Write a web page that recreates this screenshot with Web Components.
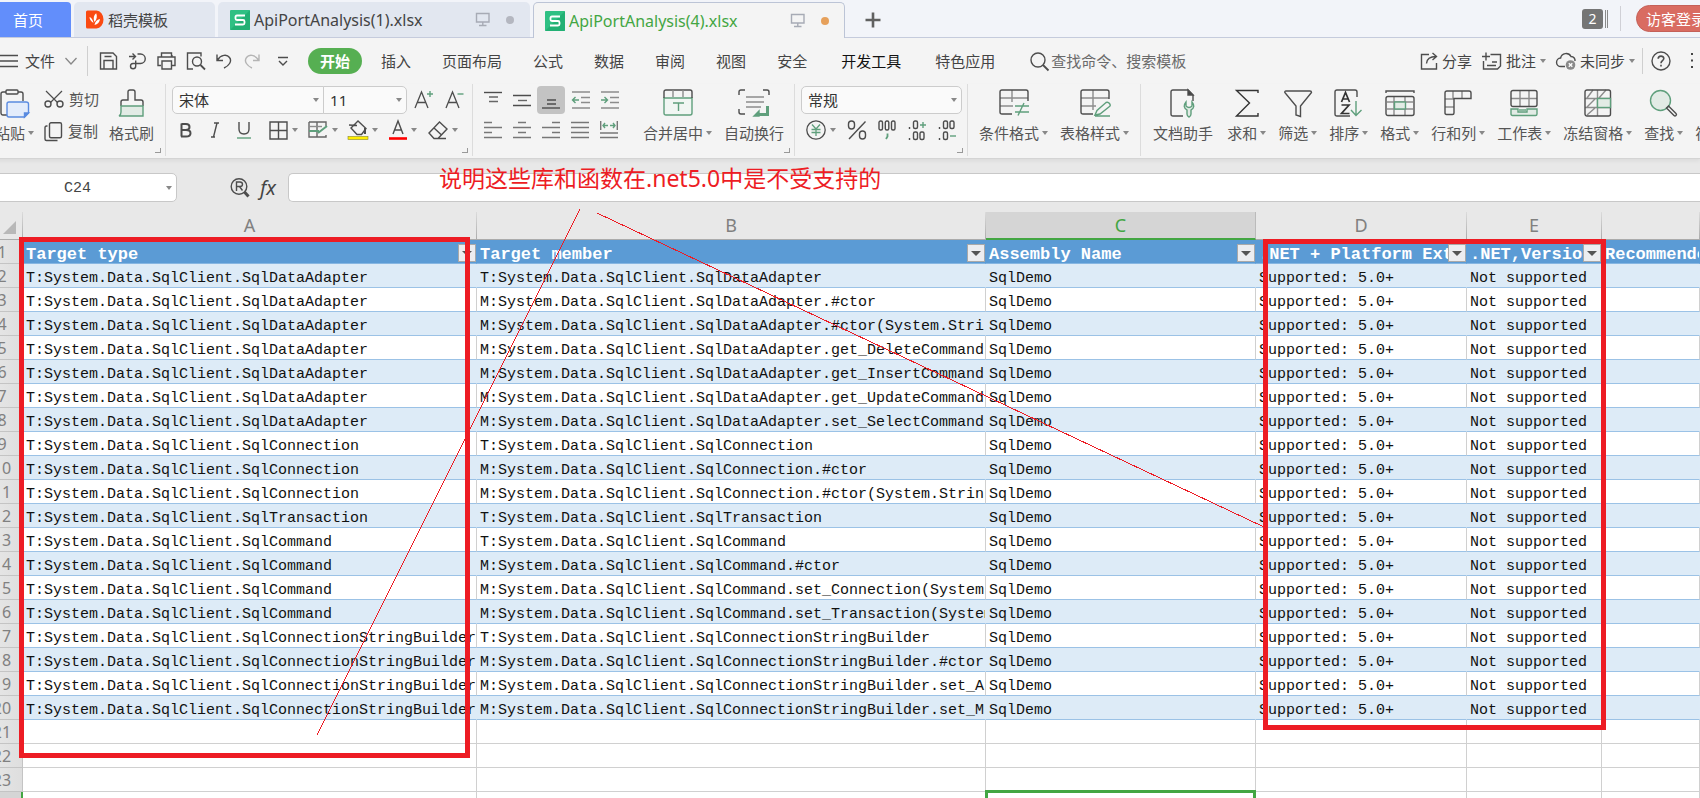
<!DOCTYPE html>
<html lang="zh-CN">
<head>
<meta charset="utf-8">
<title>ApiPortAnalysis(4).xlsx</title>
<style>
  html, body { margin: 0; height: 100%; }
  body {
    overflow: hidden;
    background: #e8e8e8;
    color: #444;
    font: 15px/20px "Noto Sans", "Noto Sans CJK SC", sans-serif;
    --mono: "Liberation Mono", "Noto Sans CJK SC", monospace;
    --green: #43a643;
  }
</style>
</head>
<body>
<app-window></app-window>

<script>
/* ---------- icons ---------- */
const D = '#4d4d4d', G = '#5f9f7c', L = '#8c8c8c', GF = '#e2ebe5';
const ICONS = {
  shell: [18, 19, `<g stroke="none"><path d="M1.500.5h9a7 9 0 0 1 0 18h-9a1.500 1.500 0 0 1-1.500-1.500V2a1.500 1.500 0 0 1 1.500-1.500z" fill="#fa4a12"/><path d="M7.500 13C4.500 11 3.500 9 3.500 7c2 .8 3.600 3 4 6zM8.500 12C7 8 8 5 10.200 3.200 11.400 6 11 9.500 8.500 12zM8.500 15c.5-3 2.500-5.500 5.500-6-.2 3-2.300 5.400-5.500 6z" fill="#fff"/></g>`],
  sheet: [20, 20, `<g stroke="none"><rect width="20" height="20" rx="1" fill="#2fc083"/><path d="M0 20L20 0v19a1 1 0 0 1-1 1z" fill="#22b074"/></g><path d="M15 5.500H7Q5.500 5.500 5.500 7v1.500Q5.500 10 7 10h6q1.500 0 1.500 1.500V13q0 1.500-1.500 1.500H5" fill="none" stroke="#fff" stroke-width="1.800"/>`],
  monitor: [16, 15, `<path d="M1.500 1.500h12.500v8.500H1.500zM7.800 10v3.500M4 13.500h7.500" stroke="#a7abb5" stroke-width="1.400"/>`],
  plus: [16, 16, `<path d="M8 .5v15M.5 8h15" stroke="#606060" stroke-width="2.600"/>`],
  menu: [18, 14, `<path d="M0 1.500h18M0 7h18M0 12.500h18" stroke-width="1.400"/>`],
  chevron: [12, 8, `<path d="M.5 1l5.500 6 5.500-6" stroke="#888" stroke-width="1.300"/>`],
  save: [19, 18, `<path d="M1.500 1h12.500l3.500 3.500V17h-16zM5 17V8.500h9V17M5.500 4.500h7" />`],
  pdf: [19, 18, `<path d="M1 4.500h6.500M4.500 1.500l3 3-3 3M9.500 2h3a4.700 4.700 0 0 1 0 9.500H5a2.600 2.600 0 1 0 2.700 2.700V8.500"/>`],
  print: [19, 18, `<path d="M4.500 5V1h10v4M4 13.500H1V5h17v8.500h-3M5 9h9.500v8H5zM15 5V3"/>`],
  preview: [20, 18, `<path d="M7 17H1.500V1h13.500v3.500"/><circle cx="11" cy="9.500" r="4.500"/><path d="M14.500 13l4.500 4.500" stroke-width="1.800"/>`],
  undo: [16, 16, `<path d="M1 1.500v6h6M1.500 7C5 1.500 11 1 13.500 4.500c3 4-1 8.500-5.500 10.500"/>`],
  redo: [16, 16, `<path d="M15 1.500v6H9M14.500 7C11 1.500 5 1 2.500 4.500c-3 4 1 8.500 5.500 10.500" stroke="#b4b4b4"/>`],
  more: [10, 10, `<path d="M0 1.500h10M1 5l4 4 4-4"/>`],
  search: [19, 19, `<circle cx="8" cy="8" r="7"/><path d="M13 13l5.500 5.500" stroke-width="1.800"/>`],
  share: [18, 18, `<path d="M9 2.500H1.500V17h15v-6M6.500 11.500c.3-4 2.500-7 9.500-7M12.500 1l4 3.500-4 3.500"/>`],
  comment: [20, 18, `<path d="M1.500 9v8h14l3-3V2.500H8.500M4 .5v8M0 4.500h8M10 10h5M5 13.500h9" />`],
  cloud: [20, 18, `<path d="M9 14.500H5A4.200 4.200 0 0 1 4.600 6 5.600 5.600 0 0 1 15 4.500c3 0 4.300 2.500 4 4.500"/><circle cx="14.500" cy="13" r="4.800" fill="#8a8a8a" stroke="none"/><path d="M12.800 11.200l3.500 3.500m0-3.500l-3.500 3.500" stroke="#fff"/>`],
  help: [20, 20, `<circle cx="10" cy="10" r="9"/><path d="M7.200 7.800c0-3.700 5.600-3.500 5.600-.2 0 2-2.800 2.200-2.800 4.600M10 13.800v1.700" stroke-width="1.600"/>`],
  dots: [4, 18, `<path d="M1 1h2v2H1zM1 7.500h2v2H1zM1 14h2v2H1z" fill="#444" stroke="none"/>`],
  paste: [30, 29, `<path d="M7 26H3a2 2 0 0 1-2-2V5a2 2 0 0 1 2-2h3M18 3h3a2 2 0 0 1 2 2v7"/><rect x="6" y="1" width="12" height="4" rx="1"/><path d="M9 13h17q2.500 0 2.500 2v9l-4 4H9q-2 0-2-2V15q0-2 2-2z" fill="#e3ecfb" stroke="#5a8be0"/><path d="M24.500 28v-4h4z" fill="#5a8be0" stroke="#5a8be0"/>`],
  cut: [20, 18, `<path d="M2 1l11.500 11.500M18 1L6.500 12.500" stroke-width="1.200"/><circle cx="4" cy="14" r="3"/><circle cx="16" cy="14" r="3"/>`],
  copy: [19, 19, `<rect x="5.500" y=".8" width="12" height="15" rx="1.500"/><path d="M3.500 4H2.500Q1 4 1 5.500V17q0 1.500 1.500 1.500h11"/>`],
  brush: [28, 28, `<path d="M3 17v-4q0-2 2-2h5V3q0-2 2-2h3q2 0 2 2v8h6q2 0 2 2v4"/><path d="M3 17h22v10H1q2-1 2-4z" fill="${GF}" stroke="${G}"/>`],
  bold: [14, 16, `<path d="M2.500 1.500V14.500M2.500 2H7q3.500 0 3.500 3T7 8H3m4 0q4.500 0 4.500 3.200T7 14.500H2" stroke-width="2"/>`],
  italic: [10, 16, `<path d="M4 1h5M1 15h4M7 1L3.500 15" stroke-width="1.400"/>`],
  underline: [14, 17, `<path d="M2 0v7q0 5 5 5t5-5V0"/><path d="M0 16h14" stroke="${G}"/>`],
  borders: [19, 19, `<path d="M1 1h17v17H1zM9.500 1v17M1 9.500h17"/>`],
  drawtable: [20, 18, `<path d="M1 1h17v4M1 1v15h17v-2M9 1v15" stroke="#666"/><path d="M1 5.500h13" stroke="${L}"/><path d="M1 10h10M10 12l9-7" stroke="${G}" stroke-width="2"/>`],
  fill: [20, 20, `<path d="M10 1L3 8l6 6.500h4.500L18 8.500zM1 5l8 .5" /><path d="M17 8v6" stroke-width="2"/><rect x="0" y="16.500" width="20" height="3" fill="#ffee00" stroke="#88882a" stroke-width=".6"/>`],
  fontcolor: [18, 19, `<path d="M4 13L9 0l5 13M5.500 9h7"/><path d="M0 17.500h18" stroke="#f00" stroke-width="2.600"/>`],
  eraser: [20, 18, `<path d="M11.500 1L19 8l-9 9.500H6L1 12zM5.500 6.500l7.500 7M9 17.500h9"/>`],
  grow: [19, 18, `<path d="M1 17L7.500 1l6.500 16M3.500 11.500h8" stroke-width="1.300"/><path d="M13 3h6M16 0v6" stroke="${G}"/>`],
  shrink: [19, 18, `<path d="M1 17L7.500 1l6.500 16M3.500 11.500h8" stroke-width="1.300"/><path d="M12.500 3h6" stroke="${G}"/>`],
  atop: [18, 18, `<path d="M0 1.500h18"/><path d="M5 6h9M5 10.500h9" stroke="#666"/>`],
  amid: [18, 18, `<path d="M0 4.500h18M0 14.500h18"/><path d="M5 9.500h9" stroke="#666"/>`],
  abot: [18, 18, `<path d="M5 9h9M5 13h9"/><path d="M0 17h18"/>`],
  outdent: [19, 18, `<path d="M1 1h18M10 6.500h9M10 11.500h9M1 17h18" stroke="${L}"/><path d="M8 9H1.500M4.500 6L1.500 9l3 3" stroke="${G}"/>`],
  indent: [19, 18, `<path d="M1 1h18M10 6.500h9M10 11.500h9M1 17h18" stroke="${L}"/><path d="M1 9h6.500M4.500 6l3 3-3 3" stroke="${G}"/>`],
  left: [18, 18, `<path d="M0 1.500h8M0 6.500h18M0 11.500h8M0 16.500h18" stroke="#777"/>`],
  center: [18, 18, `<path d="M5 1.500h8M0 6.500h18M5 11.500h8M0 16.500h18" stroke="#777"/>`],
  right: [18, 18, `<path d="M10 1.500h8M0 6.500h18M10 11.500h8M0 16.500h18" stroke="#777"/>`],
  justify: [18, 18, `<path d="M0 1.500h18M0 6.500h18M0 11.500h18M0 16.500h18" stroke="#777"/>`],
  distribute: [18, 18, `<path d="M.7 0v9M17.300 0v9M0 12h18M0 16.500h18" stroke="#777"/><path d="M8 4.500H3M5 2L3 4.500 5 7M10 4.500h5M13 2l2 2.500L13 7" stroke="${G}"/>`],
  merge: [30, 28, `<path d="M1 9h28v15q0 2-2 2H3q-2 0-2-2z" fill="#f1f6f3" stroke="${G}"/><path d="M1 9V3q0-2 2-2h24q2 0 2 2v6"/><path d="M10 1v7M20 1v7" stroke="${L}"/><path d="M10 14h11M15.500 14v8" stroke="${G}"/>`],
  wrap: [32, 28, `<path d="M1 6V3q0-2 2-2h4M25 1h4q2 0 2 2v3M1 20v3q0 2 2 2h4"/><path d="M8 8h18M8 13h18M8 18h15" stroke="${L}"/><path d="M29.500 17v8.500H20" stroke="${G}" stroke-width="3"/><path d="M21 22v5h-5z" fill="${G}" stroke="${G}"/>`],
  yuan: [20, 20, `<circle cx="10" cy="10" r="9.200" stroke-width="1.300"/><path d="M6 4.500l4 4.500 4-4.500M10 9v7M5.500 9.500h9M5.500 12.500h9" stroke="${G}" stroke-width="1.300"/>`],
  percent: [20, 20, `<rect x="1.500" y="1" width="6" height="8" rx="3"/><rect x="12.500" y="11" width="6" height="8" rx="3"/><path d="M18.500 1.500L2 19"/>`],
  thousand: [18, 20, `<rect x="1" y="1" width="3.500" height="9" rx="1.500"/><rect x="7.300" y="1" width="3.500" height="9" rx="1.500"/><rect x="13.500" y="1" width="3.500" height="9" rx="1.500"/><path d="M9.500 13.500v3L8 19" stroke="${G}" stroke-width="1.800"/>`],
  incdec: [18, 21, `<rect x="5.500" y="1" width="4" height="7.500" rx="1.500"/><path d="M1.500 7v2M1.500 18v2"/><rect x="5.500" y="12" width="4" height="7.500" rx="1.500"/><rect x="12" y="12" width="4" height="7.500" rx="1.500"/><path d="M12 5h6M15 2v6" stroke="${G}"/>`],
  decdec: [18, 21, `<rect x="5.500" y="1" width="4" height="7.500" rx="1.500"/><rect x="12" y="1" width="4" height="7.500" rx="1.500"/><path d="M1.500 7v2M1.500 18v2"/><rect x="5.500" y="12" width="4" height="7.500" rx="1.500"/><path d="M12 16h6" stroke="${G}"/>`],
  cond: [30, 28, `<path d="M13 1v12M1 9h28M1 17h13" stroke="${L}"/><path d="M13 25H3q-2 0-2-2V3q0-2 2-2h24q2 0 2 2v9"/><path d="M16 17h14M16 23h14M25 14l-6 12.500" stroke="${G}"/>`],
  style: [30, 28, `<path d="M13 1v20M1 9h28M1 17h15" stroke="${L}"/><path d="M13 25H3q-2 0-2-2V3q0-2 2-2h24q2 0 2 2v7"/><path d="M15 26l2-4.500L26 13.500q2-1 3.500 1t0 3L20 25zM15 27h15" stroke="${G}"/>`],
  helper: [27, 29, `<path d="M13 27H3q-2 0-2-2V3q0-2 2-2h15l5 5v6"/><path d="M18 1v5h5z" fill="#444"/><path d="M16 13q-4 5 1 8v4q0 2 2 3 2-1 2-3v-4q5-3 1-8v4q-3 3-6 0z" fill="${GF}" stroke="${G}"/>`],
  sum: [24, 29, `<path d="M23 4V1.500H1.500L14.500 14 1.500 27H23v-3" stroke="#333"/>`],
  filter: [28, 29, `<path d="M2 2h24q1.500 0 1.500 1.500L16.500 17v10.500l-4.500-1.500V17L.8 3.500Q.6 2 2 2z"/>`],
  sort: [29, 28, `<path d="M16 27H3q-2 0-2-2V3q0-2 2-2h18q2 0 2 2v5"/><path d="M7.500 13l4-9.500 4 9.500M8.500 10h6M7.500 16h7.500l-7.500 8.500h8" stroke="#333" stroke-width="1.700"/><path d="M22 12v14M17 21l5 5.500 5.500-5.500" stroke="${G}"/>`],
  format: [30, 28, `<path d="M1 4V2h28v2"/><path d="M2 13h26M2 20h26M9 8v18M20 8v18" stroke="${L}"/><rect x="1" y="7.500" width="28" height="19" rx="2"/><rect x="9.500" y="13" width="11" height="7" fill="${GF}" stroke="${G}"/>`],
  rowcol: [28, 26, `<path d="M9 1v8M18 1v8M1 9h9M1 17h9" stroke="${L}"/><path d="M3 1h22q2 0 2 2v5.500H10V23q0 1.500-1.500 1.500H2.500Q1 24.500 1 23V3q0-2 2-2z"/>`],
  worksheet: [28, 28, `<path d="M10 1v16M19 1v16M1 9.500h26" stroke="${L}"/><rect x="1" y="1.500" width="26" height="16" rx="2"/><path d="M1 20h7v3h9v-3h10v5q0 1.500-1.500 1.500h-23Q1 26.500 1 25z" fill="${GF}" stroke="${G}"/><path d="M9 21h7" stroke="${G}"/>`],
  freeze: [27, 28, `<path d="M13.500 1v26M1 9.500h25M1 18.500h25M3 9L9 1M15 9l7-8M3 18l8-8M3 26l8-7" stroke="${L}"/><rect x="1" y="1" width="25.500" height="26" rx="2"/><rect x="13.500" y="9.500" width="13" height="9" fill="${GF}" stroke="${G}"/>`],
  find: [29, 29, `<circle cx="11.500" cy="11.500" r="10" fill="${GF}" stroke="${G}"/><path d="M17.500 19l2-2 7.500 7.500q1 1 0 2t-2 0z"/>`],
  symbol: [26, 28, `<path d="M3 26h6v-3Q1 18 3 9t10-8 10 8-6 14v3h8"/>`],
  zoomr: [20, 20, `<circle cx="9" cy="8.500" r="7.800"/><path d="M6.500 13V4h3.500q2.500 0 2.500 2.200T10 8.500H6.500M9.500 8.500L12.500 12.500" stroke-width="1.400"/><path d="M14.500 14l4 4.500" stroke-width="3"/>`],
};
customElements.define('ui-icon', class extends HTMLElement {
  connectedCallback() {
    const [w, h, body] = ICONS[this.getAttribute('name')];
    this.attachShadow({ mode: 'open' }).innerHTML = `
      <style>:host{display:block;flex:none;line-height:0}svg{display:block;fill:none;stroke:${D};stroke-width:1.4;overflow:visible}</style>
      <svg width="${w}" height="${h}" viewBox="0 0 ${w} ${h}" aria-hidden="true">${body}</svg>`;
  }
});

/* Elements whose shadow root is a fixed piece of markup. */
function define(tag, html) {
  const template = document.createElement('template');
  template.innerHTML = html;
  customElements.define(tag, class extends HTMLElement {
    constructor() {
      super();
      this.attachShadow({ mode: 'open' }).append(template.content.cloneNode(true));
    }
  });
}

const BUTTON_RESET = `button{all:unset;box-sizing:border-box;display:flex;align-items:center;cursor:pointer;white-space:nowrap}`;

define('drop-caret', `
  <style>:host{display:block;flex:none;border:3px solid transparent;border-top:4px solid #888;border-bottom:0;width:0;height:0}</style>`);

/* ---------- tabs ---------- */
define('doc-tab', `
  <style>
    :host{display:block;box-sizing:border-box;height:36px;padding-bottom:1px}
    button{all:unset;box-sizing:border-box;display:flex;align-items:center;gap:4px;width:100%;height:100%;padding:0 16px 0 12px;
      background:#e2e7f0;border-radius:5px 5px 0 0;white-space:nowrap;cursor:pointer;color:#444}
    ::slotted([slot=end]){margin-left:auto}
    :host([home]) button{background:#628efb;color:#fff;padding:0 28px 0 33px;border-radius:0 4px 0 0}
    :host([wide]) button{font-size:16px}
    :host([active]){padding-bottom:0}
    :host([active]) button{background:#f4f4f4;border:1px solid #bcc4d6;border-bottom:0;color:var(--green);padding:0 15px 0 11px}
  </style>
  <button role="tab"><slot></slot><slot name="end"></slot></button>`);

define('tab-status', `
  <style>:host{display:flex;align-items:center;gap:15px;--dot:#b4b7c0}:host([dirty]){--dot:#e6a05a}
    i{width:8px;height:8px;border-radius:50%;background:var(--dot)}</style>
  <ui-icon name="monitor"></ui-icon><i></i>`);

define('tab-strip', `
  <style>
    :host{display:flex;align-items:flex-end;height:38px;box-sizing:border-box;background:linear-gradient(#c5cbdc,#c5cbdc) bottom/100% 1px no-repeat #f2f4f9}
    .home{width:91px}.docer{width:141px;margin:0 3px}.doc{width:312px}.doc+.doc{margin-left:3px}
    ${BUTTON_RESET}
    .add{margin:0 0 10px 20px}
    .right{margin-left:auto;display:flex;align-items:center;align-self:flex-start;height:37px;flex:none}
    .count{background:#757575;color:#fff;border-radius:3px;width:21px;height:20px;justify-content:center;font-size:14px}
    .bars{width:1px;height:18px;border:solid #8a8a8a;border-width:0 1px;margin:0 12px 0 2px}
    .sep{width:1px;height:25px;background:#d0d0d6;margin-right:15px}
    .login{height:27px;width:86px;margin-right:-22px;padding-left:9px;border-radius:14px;background:#d96c61;border:1px solid #c46058;color:#fff}
  </style>
  <doc-tab class="home" home>首页</doc-tab>
  <doc-tab class="docer"><ui-icon name="shell"></ui-icon>稻壳模板</doc-tab>
  <doc-tab class="doc" wide><ui-icon name="sheet"></ui-icon>ApiPortAnalysis(1).xlsx<tab-status slot="end"></tab-status></doc-tab>
  <doc-tab class="doc" wide active><ui-icon name="sheet"></ui-icon>ApiPortAnalysis(4).xlsx<tab-status slot="end" dirty></tab-status></doc-tab>
  <button class="add" aria-label="新建"><ui-icon name="plus"></ui-icon></button>
  <div class="right">
    <button class="count">2</button><span class="bars"></span><span class="sep"></span>
    <button class="login">访客登录</button>
  </div>`);

/* ---------- menu bar ---------- */
define('menu-bar', `
  <style>
    :host{display:flex;align-items:center;height:46px;background:#f4f4f4;padding-left:20px;white-space:nowrap}
    ${BUTTON_RESET}
    .file{gap:7px}.file ui-icon+ui-icon{margin-left:3px}
    .sep{width:1px;height:30px;background:#cfcfcf;margin:0 11px 0 10px}
    .quick{display:flex;align-items:center;gap:10px}
    .quick button:nth-child(n+6){margin-left:2px}.quick button:last-child{margin-left:8px}
    nav{display:flex;align-items:center;gap:31px;margin-left:20px}
    nav .on{background:#56af52;color:#fff;font-weight:700;height:26px;padding:0 12px;border-radius:13px;margin-right:-12px}
    nav .dev{color:#111;margin:0 3px}
    label{display:flex;align-items:center;gap:2px;margin-left:35px}
    input{all:unset;width:150px}
    input::placeholder{color:#6a6a6a;opacity:1}
    .right{display:flex;align-items:center;margin-left:auto;gap:10px}
    .right button{gap:4px}
    .right .sep{height:26px;margin:0 -2px 0 -3px}
    .right .dots{margin:0 6px 0 9px}
  </style>
  <button class="file"><ui-icon name="menu"></ui-icon>文件<ui-icon name="chevron"></ui-icon></button>
  <span class="sep"></span>
  <div class="quick">
    <button aria-label="保存"><ui-icon name="save"></ui-icon></button>
    <button aria-label="输出为PDF"><ui-icon name="pdf"></ui-icon></button>
    <button aria-label="打印"><ui-icon name="print"></ui-icon></button>
    <button aria-label="打印预览"><ui-icon name="preview"></ui-icon></button>
    <button aria-label="撤消"><ui-icon name="undo"></ui-icon></button>
    <button aria-label="恢复"><ui-icon name="redo"></ui-icon></button>
    <button aria-label="自定义"><ui-icon name="more"></ui-icon></button>
  </div>
  <nav>
    <button class="on">开始</button><button>插入</button><button>页面布局</button><button>公式</button><button>数据</button>
    <button>审阅</button><button>视图</button><button>安全</button><button class="dev">开发工具</button><button>特色应用</button>
  </nav>
  <label><ui-icon name="search"></ui-icon><input type="search" aria-label="查找" placeholder="查找命令、搜索模板"></label>
  <div class="right">
    <button><ui-icon name="share"></ui-icon>分享</button>
    <button><ui-icon name="comment"></ui-icon>批注<drop-caret></drop-caret></button>
    <button><ui-icon name="cloud"></ui-icon>未同步<drop-caret></drop-caret></button>
    <span class="sep"></span>
    <button aria-label="帮助"><ui-icon name="help"></ui-icon></button>
    <button class="dots" aria-label="更多"><ui-icon name="dots"></ui-icon></button>
  </div>`);

/* ---------- ribbon ---------- */
customElements.define('big-button', class extends HTMLElement {
  connectedCallback() {
    this.attachShadow({ mode: 'open' }).innerHTML = `
      <style>
        :host{display:block;flex:none;color:#555}
        ${BUTTON_RESET}
        button{flex-direction:column;padding-top:5px}
        .pic{height:28px;display:flex;align-items:center;margin-bottom:6px}
        .text{display:flex;align-items:center;gap:3px}
      </style>
      <button><span class="pic"><ui-icon name="${this.getAttribute('icon')}"></ui-icon></span>
      <span class="text"><slot></slot>${this.hasAttribute('menu') ? '<drop-caret></drop-caret>' : ''}</span></button>`;
  }
});
customElements.define('tool-button', class extends HTMLElement {
  connectedCallback() {
    this.attachShadow({ mode: 'open' }).innerHTML = `
      <style>
        :host{display:block;flex:none}
        ${BUTTON_RESET}
        button{width:28px;height:28px;justify-content:center;gap:4px;border-radius:4px}
        :host([menu]) button{width:40px}
        :host([text]) button{width:auto;gap:5px;color:#555}
        :host([pressed]) button{background:#c3c3c3}
      </style>
      <button aria-label="${this.getAttribute('text') || this.getAttribute('icon')}"><ui-icon name="${this.getAttribute('icon')}"></ui-icon>${this.getAttribute('text') || ''}${this.hasAttribute('menu') ? '<drop-caret></drop-caret>' : ''}</button>`;
  }
});
customElements.define('combo-box', class extends HTMLElement {
  connectedCallback() {
    this.attachShadow({ mode: 'open' }).innerHTML = `
      <style>
        :host{display:flex;align-items:center;box-sizing:border-box;height:28px;border:1px solid #ccc;border-radius:5px;background:#fafafa}
        select{appearance:none;border:0;background:none;font:inherit;color:#333;flex:1;min-width:0;padding:0 16px 0 6px;height:26px;outline:0}
        drop-caret{margin:0 4px 0 -11px;pointer-events:none}
      </style>
      <select aria-label="${this.getAttribute('label')}"><option>${this.getAttribute('value')}</option></select><drop-caret></drop-caret>`;
  }
});
define('ribbon-group', `
  <style>
    :host{display:flex;align-items:flex-start;flex:none;box-sizing:border-box;height:72px;position:relative;border-right:1px solid #dcdcdc}
    :host(:last-of-type){border:0}
    i{display:none;position:absolute;right:4px;bottom:3px;width:5px;height:4px;border:solid #999;border-width:0 1px 1px 0}
    :host([corner]) i{display:block}
  </style><slot></slot><i></i>`);

define('ribbon-bar', `
  <style>
    :host{display:flex;height:74px;background:#f4f4f4;border-bottom:1px solid #d4d4d4;box-shadow:0 2px 4px #0000000f;overflow:hidden;position:relative}
    .rows{display:grid;grid-template-rows:28px 28px;gap:2px;margin-top:2px;flex:none}
    .row{display:flex;align-items:center;gap:1px}
    .clip{gap:4px;margin:1px 10px 0}
    .g1{padding:0 11px 0 15px}.g2{padding:0 4px 0 6px}.g3{padding:0 10px 0 6px}.g4{padding:0 5px 0 6px}.g5{padding:0 11px;gap:12px}.g6{padding:0 12px;gap:12px}
    .font{width:152px;border-radius:5px 0 0 5px}.size{width:84px;border-radius:0 5px 5px 0;margin-left:-2px;margin-right:1px}
    .size+*{margin-right:2px}
    .number{width:161px}.loose{gap:2px}
    .g2 .row tool-button[icon=borders]{margin-left:4px}
    .g2 .row tool-button[menu]+tool-button{margin-left:-1px}
    .mergeb{margin:0 12px 0 20px}
    .helper{margin-right:2px}
  </style>
  <ribbon-group class="g1" corner>
    <big-button icon="paste" menu>粘贴</big-button>
    <div class="rows clip"><tool-button icon="cut" text="剪切"></tool-button><tool-button icon="copy" text="复制"></tool-button></div>
    <big-button icon="brush">格式刷</big-button>
  </ribbon-group>
  <ribbon-group class="g2" corner>
    <div class="rows">
      <div class="row"><combo-box class="font" label="字体" value="宋体"></combo-box><combo-box class="size" label="字号" value="11"></combo-box><tool-button icon="grow"></tool-button><tool-button icon="shrink"></tool-button></div>
      <div class="row"><tool-button icon="bold"></tool-button><tool-button icon="italic"></tool-button><tool-button icon="underline"></tool-button><tool-button icon="borders" menu></tool-button><tool-button icon="drawtable" menu></tool-button><tool-button icon="fill" menu></tool-button><tool-button icon="fontcolor" menu></tool-button><tool-button icon="eraser" menu></tool-button></div>
    </div>
  </ribbon-group>
  <ribbon-group class="g3" corner>
    <div class="rows">
      <div class="row"><tool-button icon="atop"></tool-button><tool-button icon="amid"></tool-button><tool-button icon="abot" pressed></tool-button><tool-button icon="outdent"></tool-button><tool-button icon="indent"></tool-button></div>
      <div class="row"><tool-button icon="left"></tool-button><tool-button icon="center"></tool-button><tool-button icon="right"></tool-button><tool-button icon="justify"></tool-button><tool-button icon="distribute"></tool-button></div>
    </div>
    <big-button class="mergeb" icon="merge" menu>合并居中</big-button>
    <big-button icon="wrap">自动换行</big-button>
  </ribbon-group>
  <ribbon-group class="g4" corner>
    <div class="rows">
      <combo-box class="number" label="数字格式" value="常规"></combo-box>
      <div class="row loose"><tool-button icon="yuan" menu></tool-button><tool-button icon="percent"></tool-button><tool-button icon="thousand"></tool-button><tool-button icon="incdec"></tool-button><tool-button icon="decdec"></tool-button></div>
    </div>
  </ribbon-group>
  <ribbon-group class="g5">
    <big-button icon="cond" menu>条件格式</big-button>
    <big-button icon="style" menu>表格样式</big-button>
  </ribbon-group>
  <ribbon-group class="g6">
    <big-button class="helper" icon="helper">文档助手</big-button>
    <big-button icon="sum" menu>求和</big-button>
    <big-button icon="filter" menu>筛选</big-button>
    <big-button icon="sort" menu>排序</big-button>
    <big-button icon="format" menu>格式</big-button>
    <big-button icon="rowcol" menu>行和列</big-button>
    <big-button icon="worksheet" menu>工作表</big-button>
    <big-button icon="freeze" menu>冻结窗格</big-button>
    <big-button icon="find" menu>查找</big-button>
    <big-button icon="symbol" menu>符号</big-button>
  </ribbon-group>`);

/* ---------- formula bar ---------- */
define('formula-bar', `
  <style>
    :host{display:flex;align-items:center;padding:14px 0 10px}
    ${BUTTON_RESET}
    .name,.formula{box-sizing:border-box;height:29px;background:#fff;border:1px solid #c8c8c8;border-radius:5px;outline:0;font:15px var(--mono);color:#444}
    .name{display:flex;align-items:center;width:197px}
    .name input{all:unset;flex:1;min-width:0;text-align:center;padding:2px 0 0 8px}
    .name drop-caret{margin-right:4px}
    .formula{flex:1;min-width:0;border-right:0;border-radius:5px 0 0 5px;padding:0 8px}
    .find{margin:0 10px 0 53px}
    .fx{font:italic 20px/28px "Noto Sans",sans-serif;width:28px;color:#444}
  </style>
  <div class="name"><input aria-label="名称框" value="C24"><drop-caret></drop-caret></div>
  <button class="find" aria-label="浏览公式"><ui-icon name="zoomr"></ui-icon></button>
  <button class="fx">fx</button>
  <input class="formula" aria-label="编辑栏">`);

/* ---------- sheet ---------- */
const NS = 'System.Data.SqlClient.';
const ROWS = [
  ['SqlDataAdapter', 'T:', ''],
  ['SqlDataAdapter', 'M:', '.#ctor'],
  ['SqlDataAdapter', 'M:', '.#ctor(System.Stri'],
  ['SqlDataAdapter', 'M:', '.get_DeleteCommand'],
  ['SqlDataAdapter', 'M:', '.get_InsertCommand'],
  ['SqlDataAdapter', 'M:', '.get_UpdateCommand'],
  ['SqlDataAdapter', 'M:', '.set_SelectCommand'],
  ['SqlConnection', 'T:', ''],
  ['SqlConnection', 'M:', '.#ctor'],
  ['SqlConnection', 'M:', '.#ctor(System.Strin'],
  ['SqlTransaction', 'T:', ''],
  ['SqlCommand', 'T:', ''],
  ['SqlCommand', 'M:', '.#ctor'],
  ['SqlCommand', 'M:', '.set_Connection(System'],
  ['SqlCommand', 'M:', '.set_Transaction(System'],
  ['SqlConnectionStringBuilder', 'T:', ''],
  ['SqlConnectionStringBuilder', 'M:', '.#ctor'],
  ['SqlConnectionStringBuilder', 'M:', '.set_A'],
  ['SqlConnectionStringBuilder', 'M:', '.set_M'],
];
const HEADS = ['Target type', 'Target member', 'Assembly Name', '.NET + Platform Ext', '.NET,Version', 'Recommended'];
customElements.define('sheet-grid', class extends HTMLElement {
  connectedCallback() {
    const filter = '<button aria-label="筛选"></button>';
    const data = ROWS.map(([type, kind, member], i) => `
      <tr class="data"><th scope="row">${i + 2}</th><td>T:${NS}${type}</td><td>${kind}${NS}${type}${member}</td><td>SqlDemo</td><td>Supported: 5.0+</td><td>Not supported</td><td></td></tr>`).join('');
    const blank = [21, 22, 23, 24].map(n => `
      <tr class="${n === 24 ? 'current' : ''}"><th scope="row">${n}</th><td></td><td></td><td></td><td></td><td></td><td></td></tr>`).join('');
    this.attachShadow({ mode: 'open' }).innerHTML = `
      <style>
        :host{display:block}
        table{table-layout:fixed;width:100%;border-spacing:0}
        .n{width:43px}.a{width:454px}.b{width:509px}.c{width:270px}.d{width:211px}.e{width:135px}
        th,td{box-sizing:border-box;height:24px;padding:0;overflow:hidden;white-space:nowrap}
        td{font:15px/16px var(--mono);color:#111;text-align:left;vertical-align:bottom;padding:0 0 0 3px;background:#fff;border:solid #d0d0d0;border-width:0 1px 1px 0;position:relative}
        th{font-weight:400;color:#808080;background:#e8e8e8;text-align:center}
        thead th{height:28px;font-size:18px;padding-bottom:2px;border:solid #bbb;border-width:0 1px 1px 0;border-image:linear-gradient(#ddd,#aaa) 1}
        thead th.on{background:#d5d5d5;color:var(--green);border-image:none;border-bottom:2px solid var(--green);padding-bottom:1px}
        tbody th{font-size:16px;line-height:22px;padding-left:2px;border:solid #c4c4c4;border-width:0 1px 1px 0;background:linear-gradient(90deg,#eaeaea,#dedede)}
        thead th:first-child svg{display:block;margin:6px 6px 0 auto}
        .data td{border-bottom-color:#9bc2e6}
        .data:nth-child(even) td{background:#ddebf7;border-right-color:#ddebf7}
        .head td{background:#5b9bd5;border-color:#5b9bd5;border-bottom-color:#86b6e2;color:#fff;font-weight:700;font-size:17px}
        .head button{all:unset;box-sizing:border-box;position:absolute;right:0;top:4px;width:18px;height:18px;background:#ecedf0;border:1px solid #a9a9a9}
        .head button::after{content:"";display:block;margin:0 auto;width:0;border:5px solid transparent;border-top-color:#555;border-bottom:0}
        .current th{background:#d5d5d5;border-right:2px solid var(--green)}
        .current td:nth-child(4)::after{content:"";position:absolute;inset:-2px -1px -3px -1px;border:3px solid var(--green)}
        .current td:nth-child(4){overflow:visible}
      </style>
      <table>
        <colgroup><col class="n"><col class="a"><col class="b"><col class="c"><col class="d"><col class="e"><col></colgroup>
        <thead><tr><th><svg width="13" height="13"><path d="M13 0v13H0z" fill="#b8b8b8"/></svg></th><th>A</th><th>B</th><th class="on">C</th><th>D</th><th>E</th><th></th></tr></thead>
        <tbody>
          <tr class="head"><th scope="row">1</th>${HEADS.map((h, i) => `<td>${h}${i < 5 ? filter : ''}</td>`).join('')}</tr>
          ${data}${blank}
        </tbody>
      </table>`;
  }
});

/* Hand-drawn review marks laid over the sheet. */
define('review-marks', `
  <style>
    :host{display:block;position:absolute;left:20px;top:0;pointer-events:none;color:#ed1c24}
    p{position:absolute;left:439px;top:163px;margin:0;font-size:23px;line-height:30px;white-space:nowrap}
    svg{display:block;fill:none;stroke:currentColor;overflow:visible}
  </style>
  <svg width="1" height="1">
    <g stroke-width="5"><rect x="21.500" y="239.500" width="446" height="516"/><rect x="1265.500" y="241.500" width="338" height="486"/></g>
    <path d="M580 209L317 735M597 213L1264 527" shape-rendering="crispEdges"/>
  </svg>
  <p>说明这些库和函数在.net5.0中是不受支持的</p>`);

define('app-window', `
  <style>:host{display:flex;flex-direction:column;position:relative;margin-left:-20px;overflow:hidden;height:100vh}:host>*{flex:none}</style>
  <tab-strip></tab-strip>
  <menu-bar></menu-bar>
  <ribbon-bar></ribbon-bar>
  <formula-bar></formula-bar>
  <sheet-grid></sheet-grid>
  <review-marks></review-marks>`);
</script>
</body>
</html>
